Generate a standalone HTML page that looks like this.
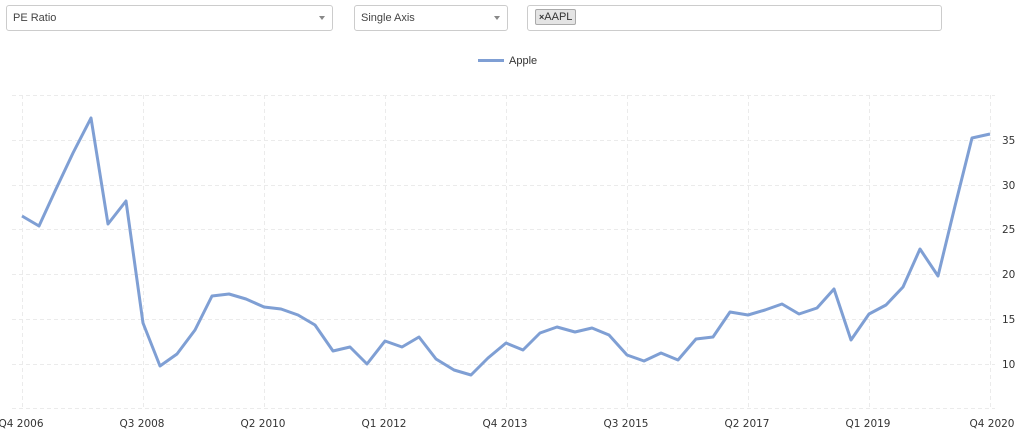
<!DOCTYPE html>
<html><head><style>
body{margin:0;width:1022px;height:435px;background:#fff;font-family:"Liberation Sans",sans-serif;position:relative;overflow:hidden}
.sel{position:absolute;top:5px;height:26px;border:1px solid #ccc;border-radius:3px;box-sizing:border-box;font-size:11px;color:#444;line-height:24px;padding-left:6px}
.arr{position:absolute;right:7px;top:10px;width:0;height:0;border-left:3px solid transparent;border-right:3px solid transparent;border-top:4px solid #888}
.tag{position:absolute;left:7px;top:3px;height:16px;line-height:15px;border:1px solid #aaa;background:#e4e4e4;border-radius:2px;font-size:11px;padding:0 3px;box-sizing:border-box;color:#333}
</style></head><body>
<div class="sel" style="left:6px;width:327px">PE Ratio<div class="arr"></div></div>
<div class="sel" style="left:354px;width:154px">Single Axis<div class="arr"></div></div>
<div class="sel" style="left:527px;width:415px;padding:0"><div class="tag"><b style="font-size:9px">×</b>AAPL</div></div>
<svg width="1022" height="435" style="position:absolute;left:0;top:0">
<line x1="478" y1="60.5" x2="504" y2="60.5" stroke="#7f9fd4" stroke-width="3"/>
<text x="509" y="64" font-size="11" fill="#333" font-family="Liberation Sans">Apple</text>
<g stroke="#ebebeb" stroke-dasharray="4,3" stroke-width="1">
<line x1="12" y1="95.5" x2="995" y2="95.5"/><line x1="12" y1="140.5" x2="995" y2="140.5"/><line x1="12" y1="185.5" x2="995" y2="185.5"/><line x1="12" y1="229.5" x2="995" y2="229.5"/><line x1="12" y1="274.5" x2="995" y2="274.5"/><line x1="12" y1="319.5" x2="995" y2="319.5"/><line x1="12" y1="364.5" x2="995" y2="364.5"/><line x1="12" y1="408.5" x2="995" y2="408.5"/>
<line x1="22.5" y1="95" x2="22.5" y2="408"/><line x1="143.5" y1="95" x2="143.5" y2="408"/><line x1="264.5" y1="95" x2="264.5" y2="408"/><line x1="385.5" y1="95" x2="385.5" y2="408"/><line x1="506.5" y1="95" x2="506.5" y2="408"/><line x1="627.5" y1="95" x2="627.5" y2="408"/><line x1="748.5" y1="95" x2="748.5" y2="408"/><line x1="869.5" y1="95" x2="869.5" y2="408"/><line x1="990.5" y1="95" x2="990.5" y2="408"/>
</g>
<polyline fill="none" stroke="#7f9fd4" stroke-width="3" stroke-linejoin="round" points="22,216 39,226 56,189 73,153 91,118 108,224 126,201 143,323 160,366 177,354 195,330 212,296 229,294 246,299 264,307 281,309 298,315 315,325 333,351 350,347 367,364 385,341 402,347 419,337 436,359 454,370 471,375 488,358 506,343 523,350 540,333 557,327 575,332 592,328 609,335 627,355 644,361 661,353 678,360 696,339 713,337 730,312 748,315 765,310 782,304 799,314 817,308 834,289 851,340 869,314 886,305 903,287 920,249 938,276 955,206 972,138 990,134"/>
<g font-size="10.5" fill="#333" font-family="DejaVu Sans">
<text x="1002" y="144">35</text><text x="1002" y="189">30</text><text x="1002" y="233">25</text><text x="1002" y="278">20</text><text x="1002" y="323">15</text><text x="1002" y="368">10</text>
<g text-anchor="middle"><text x="21" y="427">Q4 2006</text><text x="142" y="427">Q3 2008</text><text x="263" y="427">Q2 2010</text><text x="384" y="427">Q1 2012</text><text x="505" y="427">Q4 2013</text><text x="626" y="427">Q3 2015</text><text x="747" y="427">Q2 2017</text><text x="868" y="427">Q1 2019</text><text x="992" y="427">Q4 2020</text></g>
</g>
</svg>
</body></html>
